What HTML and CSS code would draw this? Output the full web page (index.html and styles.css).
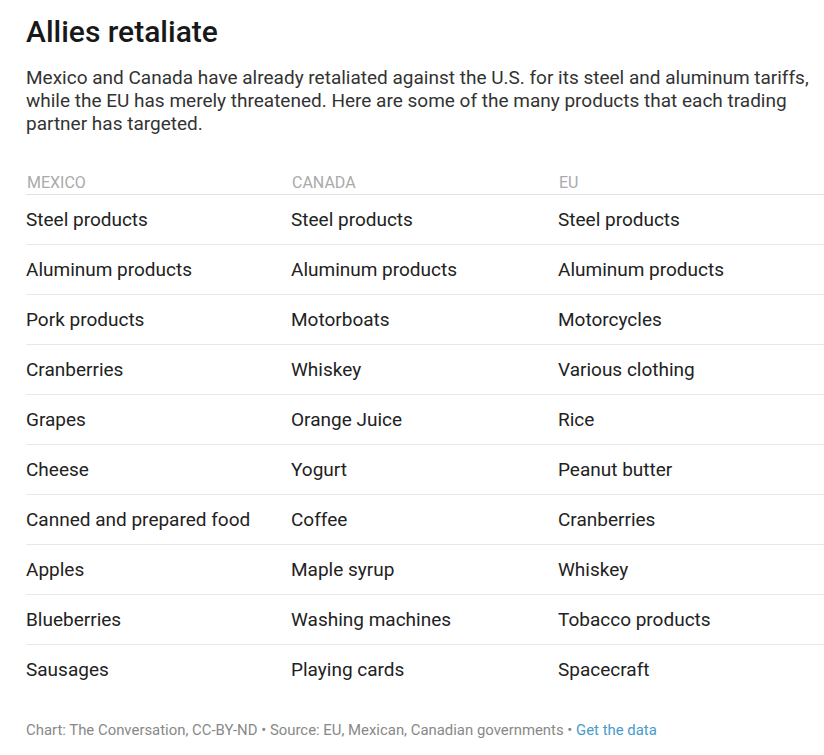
FILE: index.html
```html
<!DOCTYPE html>
<html>
<head>
<meta charset="utf-8">
<link rel="stylesheet" href="styles.css">
</head>
<body>
<div class="chart">
  <h1 class="title">Allies retaliate</h1>
  <p class="desc">Mexico and Canada have already retaliated against the U.S. for its steel and aluminum tariffs, while the EU has merely threatened. Here are some of the many products that each trading partner has targeted.</p>
  <table class="tbl">
    <thead>
      <tr><th>Mexico</th><th>Canada</th><th>EU</th></tr>
    </thead>
    <tbody>
      <tr><td>Steel products</td><td>Steel products</td><td>Steel products</td></tr>
      <tr><td>Aluminum products</td><td>Aluminum products</td><td>Aluminum products</td></tr>
      <tr><td>Pork products</td><td>Motorboats</td><td>Motorcycles</td></tr>
      <tr><td>Cranberries</td><td>Whiskey</td><td>Various clothing</td></tr>
      <tr><td>Grapes</td><td>Orange Juice</td><td>Rice</td></tr>
      <tr><td>Cheese</td><td>Yogurt</td><td>Peanut butter</td></tr>
      <tr><td>Canned and prepared food</td><td>Coffee</td><td>Cranberries</td></tr>
      <tr><td>Apples</td><td>Maple syrup</td><td>Whiskey</td></tr>
      <tr><td>Blueberries</td><td>Washing machines</td><td>Tobacco products</td></tr>
      <tr><td>Sausages</td><td>Playing cards</td><td>Spacecraft</td></tr>
    </tbody>
  </table>
  <div class="foot">Chart: The Conversation, CC-BY-ND • Source: EU, Mexican, Canadian governments • <a class="link" href="#">Get the data</a></div>
</div>
</body>
</html>
```
FILE: styles.css
```css
html, body {
  margin: 0;
  padding: 0;
  background: #fff;
}
body {
  font-family: Roboto, "Liberation Sans", sans-serif;
  color: #1d1d1d;
}
.chart {
  padding: 14px 0 0 26px;
  width: 798px;
}
.title {
  margin: 0;
  font-size: 30px;
  font-weight: 500;
  line-height: 36px;
  color: #181818;
}
.desc {
  margin: 16px 0 0;
  font-size: 19px;
  line-height: 23px;
  color: #333;
}
.tbl {
  margin-top: 37px;
  width: 798px;
  border-collapse: collapse;
  table-layout: fixed;
}
.tbl th {
  text-align: left;
  font-weight: 400;
  text-transform: uppercase;
  font-size: 16px;
  color: #aaaaaa;
  padding: 0 0 2px 0;
  text-indent: 1px;
  height: 20px;
  border-bottom: 1px solid #e3e3e3;
  vertical-align: bottom;
}
.tbl th:nth-child(1), .tbl td:nth-child(1) { width: 265px; }
.tbl th:nth-child(2), .tbl td:nth-child(2) { width: 267px; }
.tbl td {
  font-size: 19px;
  height: 49px;
  padding: 0;
  border-bottom: 1px solid #e8e8e8;
  vertical-align: middle;
  color: #222;
}
.tbl tbody tr:last-child td {
  border-bottom: none;
}
.foot {
  margin-top: 27px;
  font-size: 14.9px;
  color: #888;
}
.link {
  color: #4a9bc9;
  text-decoration: none;
}
```
